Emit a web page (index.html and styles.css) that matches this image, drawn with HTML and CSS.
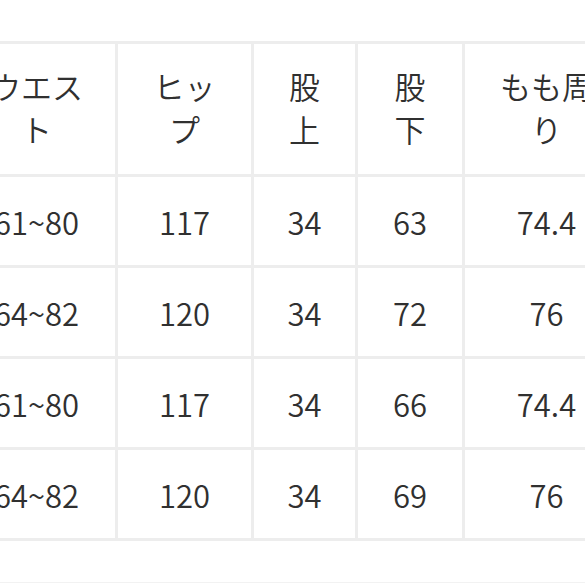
FILE: index.html
```html
<!DOCTYPE html>
<html lang="ja">
<head>
<meta charset="utf-8">
<link rel="stylesheet" href="styles.css">
</head>
<body>
<div class="page">
  <div class="size-table">
    <div class="cell head">ウエス<br>ト</div>
    <div class="cell head">ヒッ<br>プ</div>
    <div class="cell head">股<br>上</div>
    <div class="cell head">股<br>下</div>
    <div class="cell head">もも周<br>り</div>

    <div class="cell">61~80</div>
    <div class="cell">117</div>
    <div class="cell">34</div>
    <div class="cell">63</div>
    <div class="cell">74.4</div>

    <div class="cell">64~82</div>
    <div class="cell">120</div>
    <div class="cell">34</div>
    <div class="cell">72</div>
    <div class="cell">76</div>

    <div class="cell">61~80</div>
    <div class="cell">117</div>
    <div class="cell">34</div>
    <div class="cell">66</div>
    <div class="cell">74.4</div>

    <div class="cell">64~82</div>
    <div class="cell">120</div>
    <div class="cell">34</div>
    <div class="cell">69</div>
    <div class="cell">76</div>
  </div>
  <div class="rule"></div>
</div>
</body>
</html>
```

FILE: styles.css
```css
html, body {
  margin: 0;
  padding: 0;
  background: #ffffff;
  overflow: hidden;
}

.page {
  width: 585px;
  height: 585px;
  overflow: hidden;
  padding-top: 41px;
  box-sizing: border-box;
  font-family: "Noto Sans CJK JP", "Noto Sans", sans-serif;
  color: #303030;
}

.size-table {
  display: grid;
  grid-template-columns: 157px 133px 101px 104px 163px;
  grid-template-rows: 130px 88px 88px 88px 88px;
  gap: 3px;
  padding: 3px;
  background: #ededed;
  width: max-content;
  margin-left: -45px;
}

.cell {
  background: #ffffff;
  display: flex;
  align-items: center;
  justify-content: center;
  text-align: center;
  font-size: 31px;
  font-weight: 350;
  line-height: 43px;
  white-space: nowrap;
}

.head {
  padding-bottom: 4px;
}

.rule {
  height: 1px;
  margin-top: 41px;
  background: #f2f2f2;
  margin-left: -45px;
  width: 700px;
}
```
